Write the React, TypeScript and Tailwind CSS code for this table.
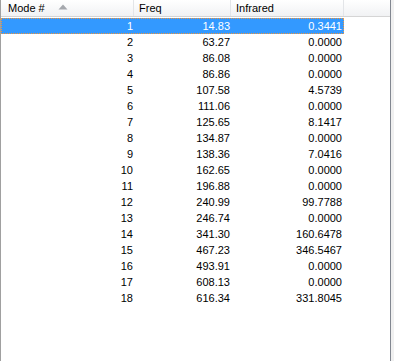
import React from "react";

const rows: [number, string, string][] = [
  [1, "14.83", "0.3441"],
  [2, "63.27", "0.0000"],
  [3, "86.08", "0.0000"],
  [4, "86.86", "0.0000"],
  [5, "107.58", "4.5739"],
  [6, "111.06", "0.0000"],
  [7, "125.65", "8.1417"],
  [8, "134.87", "0.0000"],
  [9, "138.36", "7.0416"],
  [10, "162.65", "0.0000"],
  [11, "196.88", "0.0000"],
  [12, "240.99", "99.7788"],
  [13, "246.74", "0.0000"],
  [14, "341.30", "160.6478"],
  [15, "467.23", "346.5467"],
  [16, "493.91", "0.0000"],
  [17, "608.13", "0.0000"],
  [18, "616.34", "331.8045"],
];

export default function App() {
  return (
    <div
      className="w-[394px] h-[361px] bg-[#f0f0f0] flex overflow-hidden text-[11px] text-black"
      style={{ fontFamily: '"Liberation Sans", Arial, sans-serif' }}
    >
      <div className="w-[391px] h-full bg-white border-l border-l-[#a0a0a0] border-r border-r-[#828790] flex flex-col">
        <div className="h-[17px] flex border-b border-[#d5d5d5] bg-gradient-to-b from-white to-[#f1f2f4]">
          <div className="w-[133px] border-r border-[#e3e5e8] flex items-center pl-[7px] relative">
            <span className="leading-none">Mode #</span>
            <svg className="absolute left-[57px] top-[4px]" width="10" height="6" viewBox="0 0 10 6">
              <polygon points="5,0.5 9.5,5.5 0.5,5.5" fill="#a5a8ad" />
            </svg>
          </div>
          <div className="w-[97px] border-r border-[#e3e5e8] flex items-center pl-[5px]">
            <span className="leading-none">Freq</span>
          </div>
          <div className="w-[113px] border-r border-[#e3e5e8] flex items-center pl-[5px]">
            <span className="leading-none">Infrared</span>
          </div>
          <div className="flex-1" />
        </div>
        <div className="pt-[1px] flex flex-col">
          {rows.map(([m, f, ir], i) => {
            const sel = i === 0;
            return (
              <div
                key={m}
                className={
                  sel
                    ? "h-[16px] w-[343px] flex bg-[#3399ff] text-white border border-dotted border-[#f0963c]"
                    : "h-[16px] w-[343px] flex border border-transparent"
                }
              >
                <div className="w-[132px] text-right pr-[1px] leading-[14px]">{m}</div>
                <div className="w-[97px] text-right pr-[1px] leading-[14px]">{f}</div>
                <div className="w-[112px] text-right pr-[1px] leading-[14px]">{ir}</div>
              </div>
            );
          })}
        </div>
      </div>
    </div>
  );
}
